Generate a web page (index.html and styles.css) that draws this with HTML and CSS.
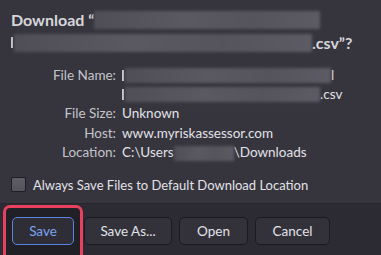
FILE: index.html
```html
<!DOCTYPE html>
<html lang="en">

<head>
  <meta charset="UTF-8">
  <title>Download</title>
  <link rel="stylesheet" href="styles.css">
</head>

<body>
  <div class="dialog">

    <div class="title">
      <div class="title-line">Download “<span class="blur" style="width: 226px"></span></div>
      <div class="title-line"><span class="stub"></span><span class="blur" style="width: 298px"></span>.csv”?</div>
    </div>

    <div class="details">
      <div class="label">File Name:</div>
      <div class="value">
        <div><span class="stub"></span><span class="blur" style="width: 206px"></span>l</div>
        <div><span class="stub"></span><span class="blur" style="width: 195px"></span>.csv</div>
      </div>
      <div class="label">File Size:</div>
      <div class="value">Unknown</div>
      <div class="label">Host:</div>
      <div class="value">www.myriskassessor.com</div>
      <div class="label">Location:</div>
      <div class="value">C:\Users<span class="blur" style="width: 60px"></span>\Downloads</div>
    </div>

    <label class="check">
      <span class="box"></span>
      Always Save Files to Default Download Location
    </label>

    <div class="footer">
      <div class="highlight"></div>
      <button class="btn btn-default">Save</button>
      <button class="btn btn-save-as">Save As...</button>
      <button class="btn">Open</button>
      <button class="btn">Cancel</button>
    </div>

  </div>
</body>

</html>
```

FILE: styles.css
```css
/* Page */
body {
  margin: 0;
  background: #36353d;
  font-family: 'Lato', 'Open Sans', sans-serif;
  color: #dcdce2;
  overflow: hidden;
}

.dialog {
  width: 381px;
  height: 255px;
  display: flex;
  flex-direction: column;
  overflow: hidden;
}

/* Title */
.title {
  padding: 8px 11px 0;
  font-size: 16px;
  font-weight: 700;
  color: #d6d6dc;
}

.title-line {
  height: 23px;
  display: flex;
  align-items: center;
  white-space: nowrap;
}

/* redacted bits */
.blur {
  display: inline-block;
  height: 18px;
  background: linear-gradient(90deg, #4f4e56, #5a5961 40%, #55545c 70%, #5c5b63);
  filter: blur(1.5px);
}

.stub {
  display: inline-block;
  width: 2px;
  height: 11px;
  margin-right: 1px;
  background: #c9c9cf;
}

/* File details */
.details {
  display: grid;
  grid-template-columns: 105px 1fr;
  column-gap: 6px;
  padding: 12px 0 0 11px;
  font-size: 13.5px;
  line-height: 19.5px;
}

.label {
  text-align: right;
  color: #c4c4cb;
}

.value {
  color: #e2e2e8;
  white-space: nowrap;
}

.value > div {
  display: flex;
  align-items: center;
  height: 19px;
}

.value .blur {
  height: 15px;
  vertical-align: middle;
}

/* Checkbox */
.check {
  display: flex;
  align-items: center;
  gap: 7px;
  margin: 14px 0 0 11px;
  font-size: 13px;
  color: #e2e2e8;
}

.box {
  width: 13px;
  height: 13px;
  border: 1px solid #1f1e25;
  border-radius: 2px;
  background: linear-gradient(#5f5e66, #54535b);
}

/* Footer */
.footer {
  position: relative;
  margin-top: 10px;
  flex: 1;
  border-top: 1px solid #27262d;
  background: #2c2b33;
  display: flex;
  align-items: flex-start;
  padding: 13px 0 0 12px;
  overflow: hidden;
}

.highlight {
  position: absolute;
  left: 3px;
  top: 1px;
  width: 74px;
  height: 60px;
  border: 3px solid #e8405f;
  border-radius: 7px;
  background: #212027;
}

.btn {
  position: relative;
  height: 28px;
  margin-right: 7px;
  padding: 0;
  border: 1px solid #1b1a20;
  border-radius: 5px;
  background: #33323a;
  color: #e2e2e8;
  font-family: inherit;
  font-size: 13.5px;
}

.btn:nth-child(4) {
  width: 69px;
}

.btn:nth-child(5) {
  width: 75px;
}

.btn-default {
  width: 62px;
  margin-right: 10px;
  border-color: #5a84e0;
  color: #7ca3f2;
  background: #2f2e36;
}

.btn-save-as {
  width: 88px;
}
```
